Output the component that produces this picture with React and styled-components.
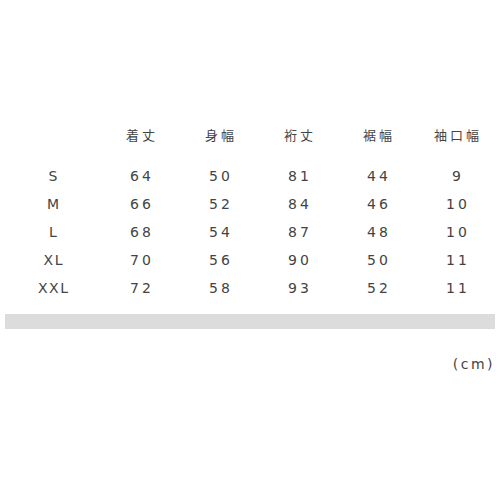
import React from "react";
import styled, { createGlobalStyle } from "styled-components";

const GlobalStyle = createGlobalStyle`
  html, body {
    margin: 0;
    padding: 0;
    background: #fff;
  }
`;

const Page = styled.div`
  width: 500px;
  height: 500px;
  padding: 120px 5px 0;
  box-sizing: border-box;
  font-family: "DejaVu Sans", "Noto Sans CJK JP", sans-serif;
  color: #444;
`;

const SizeRow = styled.div`
  display: grid;
  grid-template-columns: 96px repeat(5, 79px);
  height: 28px;
  margin-bottom: ${(p) => (p.$head ? "14px" : "0")};
`;

const Cell = styled.div`
  display: flex;
  align-items: center;
  justify-content: center;
  font-size: ${(p) => (p.$head ? "13px" : "14px")};
  letter-spacing: ${(p) => (p.$label ? "1.5px" : "3px")};
  padding-left: ${(p) => (p.$label ? "1.5px" : "3px")};
`;

const Bar = styled.div`
  height: 15px;
  margin-top: 12px;
  background: #dcdcdc;
`;

const Unit = styled.div`
  margin-top: 27px;
  text-align: right;
  font-size: 14px;
  letter-spacing: 2.5px;
`;

const headers = ["", "着丈", "身幅", "裄丈", "裾幅", "袖口幅"];
const rows = [
  ["S", 64, 50, 81, 44, 9],
  ["M", 66, 52, 84, 46, 10],
  ["L", 68, 54, 87, 48, 10],
  ["XL", 70, 56, 90, 50, 11],
  ["XXL", 72, 58, 93, 52, 11],
];

export default function App() {
  return (
    <>
      <GlobalStyle />
      <Page>
        <SizeRow $head>
          {headers.map((h, i) => (
            <Cell key={i} $head>
              {h}
            </Cell>
          ))}
        </SizeRow>
        {rows.map((r) => (
          <SizeRow key={r[0]}>
            {r.map((v, i) => (
              <Cell key={i} $label={i === 0}>
                {v}
              </Cell>
            ))}
          </SizeRow>
        ))}
        <Bar />
        <Unit>(cm)</Unit>
      </Page>
    </>
  );
}
